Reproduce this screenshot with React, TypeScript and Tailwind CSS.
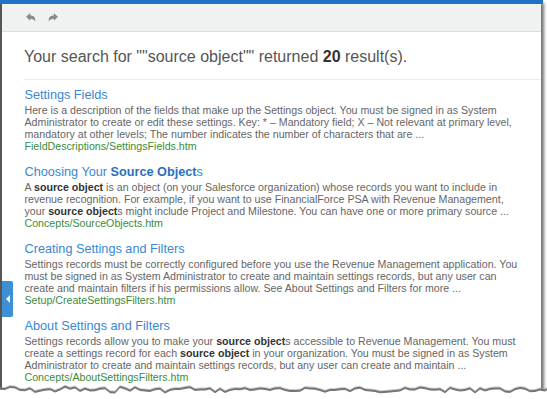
import React from "react";

interface Result {
    title: React.ReactNode;
    lines: React.ReactNode[];
    url: string;
}

const B = ({ children }: { children: React.ReactNode }) => <b className="font-bold text-[#333]">{children}</b>;

const results: Result[] = [
    {
        title: "Settings Fields",
        lines: [
            "Here is a description of the fields that make up the Settings object. You must be signed in as System",
            "Administrator to create or edit these settings. Key: * \u2013 Mandatory field; X \u2013 Not relevant at primary level,",
            "mandatory at other levels; The number indicates the number of characters that are ...",
        ],
        url: "FieldDescriptions/SettingsFields.htm",
    },
    {
        title: (
            <>
                Choosing Your <b className="font-bold text-[#2a70bb]">Source Object</b>s
            </>
        ),
        lines: [
            <>
                A <B>source object</B> is an object (on your Salesforce organization) whose records you want to include in
            </>,
            "revenue recognition. For example, if you want to use FinancialForce PSA with Revenue Management,",
            <>
                your <B>source object</B>s might include Project and Milestone. You can have one or more primary source ...
            </>,
        ],
        url: "Concepts/SourceObjects.htm",
    },
    {
        title: "Creating Settings and Filters",
        lines: [
            "Settings records must be correctly configured before you use the Revenue Management application. You",
            "must be signed in as System Administrator to create and maintain settings records, but any user can",
            "create and maintain filters if his permissions allow. See About Settings and Filters for more ...",
        ],
        url: "Setup/CreateSettingsFilters.htm",
    },
    {
        title: "About Settings and Filters",
        lines: [
            <>
                Settings records allow you to make your <B>source object</B>s accessible to Revenue Management. You must
            </>,
            <>
                create a settings record for each <B>source object</B> in your organization. You must be signed in as System
            </>,
            "Administrator to create and maintain settings records, but any user can create and maintain ...",
        ],
        url: "Concepts/AboutSettingsFilters.htm",
    },
];

function ArrowIcon({ flip }: { flip?: boolean }) {
    return (
        <svg width="10" height="9" viewBox="0 0 12 11" className={flip ? "-scale-x-100" : ""}>
            <path d="M0 4.5 L5 0 L5 3 C9.5 3 12 5.5 11 10.5 C10 8 8 7 5 7 L5 9.5 Z" fill="#8a8a8a" />
        </svg>
    );
}

// jagged torn edge at the bottom of the screenshot
function TornEdge() {
    let seed = 7;
    const rand = () => {
        seed = (seed * 9301 + 49297) % 233280;
        return seed / 233280;
    };
    const pts: [number, number][] = [];
    for (let x = 0; x <= 550; x += 5) {
        pts.push([x, 9 + rand() * 4.5 - (x % 60 < 20 ? 1.5 : 0)]);
    }
    const top = (dy: number) => pts.map(([x, y]) => `${x},${(y + dy).toFixed(1)}`).join(" L");
    return (
        <svg className="absolute left-0 bottom-0" width="547" height="22" viewBox="0 0 547 22">
            <path d={`M0,22 L${top(0)} L550,22 Z`} fill="#9a9a9a" opacity="0.55" />
            <path d={`M0,22 L${top(1)} L550,22 Z`} fill="#666" opacity="0.85" />
            <path d={`M0,22 L${top(3)} L550,22 Z`} fill="#ffffff" />
        </svg>
    );
}

export default function App() {
    return (
        <div
            className="relative w-[547px] h-[399px] bg-white overflow-hidden"
            style={{ fontFamily: '"Liberation Sans", Arial, sans-serif' }}
        >
            <div className="w-[541px] h-[394px] flex flex-col border-l-2 border-[#555] shadow-[3px_3px_3px_rgba(0,0,0,0.55)]">
                <div className="h-[4px] bg-[#2272c3] -ml-[2px] w-[543px] shrink-0" />
                <div className="h-[28px] bg-[#f0f1f1] border-b border-[#dcdcdc] flex items-center gap-[12px] pl-[24px] shrink-0">
                    <ArrowIcon />
                    <ArrowIcon flip />
                </div>
                <div className="pl-[22px] pt-[15px]">
                    <h1 className="text-[16px] leading-[20px] text-[#555] font-normal">
                        Your search for ""source object"" returned <span className="font-bold text-[#333]">20</span> result(s).
                    </h1>
                    <div className="mt-[12px] h-px bg-[#ececec]" />
                    <div className="pl-[0.5px] pt-[7px] flex flex-col gap-[12px]">
                        {results.map((r, i) => (
                            <div key={i}>
                                <div className="text-[12.7px] leading-[16px] text-[#3a87d2]">{r.title}</div>
                                <div className="mt-[1px] text-[10.65px] leading-[12px] text-[#666]">
                                    {r.lines.map((l, j) => (
                                        <div key={j} className="whitespace-nowrap">
                                            {l}
                                        </div>
                                    ))}
                                    <div className="text-[#3a8c3e]">{r.url}</div>
                                </div>
                            </div>
                        ))}
                    </div>
                </div>
            </div>
            <div className="absolute left-[2px] top-[281px] w-[11px] h-[36px] bg-[#3d8fd6] rounded-r-[2px] flex items-center justify-center">
                <div className="w-0 h-0 border-y-[4px] border-y-transparent border-r-[4px] border-r-white" />
            </div>
            <TornEdge />
        </div>
    );
}
